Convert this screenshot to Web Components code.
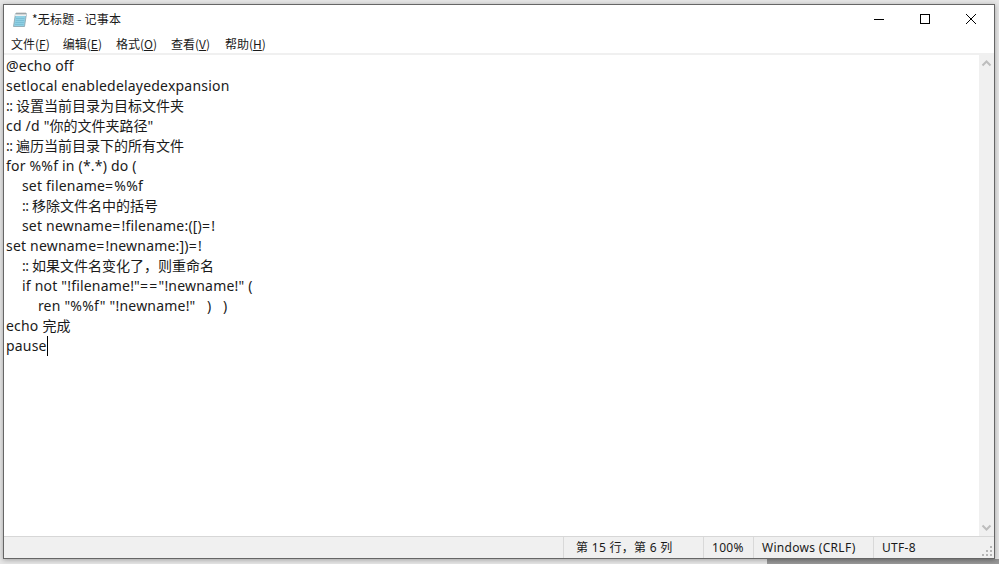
<!DOCTYPE html>
<html lang="zh">
<head>
<meta charset="utf-8">
<title>记事本</title>
<style>
html, body { margin: 0; height: 100%; overflow: hidden; }
body {
    background: linear-gradient(#8f8f8f, #9a9a9a) 767px 559px / 232px 5px no-repeat, #e6e6e6;
    font-family: "Noto Sans", "Noto Sans CJK SC", sans-serif;
}
</style>
</head>
<body>
<notepad-window title-text="*无标题 - 记事本">
<menu-item label="文件" key-char="F"></menu-item>
<menu-item label="编辑" key-char="E" style="margin-left:-1px"></menu-item>
<menu-item label="格式" key-char="O"></menu-item>
<menu-item label="查看" key-char="V"></menu-item>
<menu-item label="帮助" key-char="H" style="margin-left:1px"></menu-item>
<text-area slot="editor"></text-area>
<status-cell slot="status" width="140" inset="12">第 15 行，第 6 列</status-cell>
<status-cell slot="status" width="50">100%</status-cell>
<status-cell slot="status" width="120">Windows (CRLF)</status-cell>
<status-cell slot="status" width="121">UTF-8</status-cell>
</notepad-window>

<script>
const UI_FONT = '"Noto Sans", "Noto Sans CJK SC", sans-serif';

class MenuItem extends HTMLElement {
    connectedCallback() {
        const root = this.attachShadow({ mode: 'open' });
        root.innerHTML = `<style>
:host { display: block; padding: 0 7px; font: 12px/20px "Noto Sans CJK SC", sans-serif; color: #1a1a1a; }
u { text-underline-offset: 1px; }
</style>${this.getAttribute('label')}(<u>${this.getAttribute('key-char')}</u>)`;
    }
}

class StatusCell extends HTMLElement {
    connectedCallback() {
        const root = this.attachShadow({ mode: 'open' });
        // first cell has a bigger left inset than the others
        const inset = this.getAttribute('inset') || 8;
        root.innerHTML = `<style>
:host { display: block; box-sizing: border-box; width: ${this.getAttribute('width')}px; height: 100%; padding-left: ${inset}px;
    border-left: 1px solid #d9d9d9; font: 12px/21px ${UI_FONT}; letter-spacing: .3px; color: #1a1a1a; white-space: nowrap; }
</style><slot></slot>`;
    }
}

const LINES = [
    '@echo off',
    'setlocal enabledelayedexpansion',
    ':: 设置当前目录为目标文件夹',
    'cd /d "你的文件夹路径"',
    ':: 遍历当前目录下的所有文件',
    'for %%f in (*.*) do (',
    '    set filename=%%f',
    '    :: 移除文件名中的括号',
    '    set newname=!filename:([)=!',
    'set newname=!newname:])=!',
    '    :: 如果文件名变化了，则重命名',
    '    if not "!filename!"=="!newname!" (',
    '        ren "%%f" "!newname!"   )   )',
    'echo 完成',
    'pause'
];

class TextArea extends HTMLElement {
    // the font here is narrower than the real one in places, so some runs get their own spacing
    markup(text) {
        return text
            .replace(/=/g, '<span class="eq">=</span>')
            .replace(/^ +/, m => `<span class="indent">${m}</span>`)
            .replace(/:: /, '<span class="colons">:: </span>')
            .replace(/[\u4e00-\u9fff，]+/g, m => `<span class="cjk">${m}</span>`);
    }

    connectedCallback() {
        const root = this.attachShadow({ mode: 'open' });
        root.innerHTML = `<style>
:host { display: block; height: 100%; overflow: hidden; background: #fff; color: #1a1a1a;
    font: 14px/20px ${UI_FONT}; letter-spacing: .2px; padding: 1px 0 0 2px; box-sizing: border-box; }
.line { white-space: pre; height: 20px; }
.indent { letter-spacing: .35px; }
.colons { letter-spacing: -.4px; }
.cjk { letter-spacing: 0; }
.eq { letter-spacing: 1.2px; }
.caret { display: inline-block; width: 1px; height: 20px; background: #000; vertical-align: top; }
</style>`;
        LINES.forEach((text, i) => {
            const line = document.createElement('div');
            line.className = 'line';
            line.innerHTML = this.markup(text);
            if (i === LINES.length - 1) {
                const caret = document.createElement('span');
                caret.className = 'caret';
                line.appendChild(caret);
            }
            root.appendChild(line);
        });
    }
}

class NotepadWindow extends HTMLElement {
    connectedCallback() {
        const root = this.attachShadow({ mode: 'open' });
        root.innerHTML = `<style>
:host { box-sizing: border-box; width: 992px; height: 555px; margin: 4px 0 0 3px;
    border: 1px solid #666; background: #fff; display: flex; flex-direction: column;
    box-shadow: 0 1px 5px rgba(0,0,0,.3); }
.title { height: 28px; display: flex; align-items: center; flex: none; }
.icon { margin: 0 3px 0 8px; display: block; }
.name { font: 12px/16px "Noto Sans CJK SC", sans-serif; letter-spacing: .2px; color: #1a1a1a; flex: 1; }
.btn { width: 46px; height: 28px; display: flex; align-items: center; justify-content: center; }
.menu { height: 19px; margin-top: 1px; display: flex; flex: none; }
.body { flex: 1; min-height: 0; display: flex; border-top: 2px solid #f0f0f0; }
.edit { flex: 1; min-width: 0; }
.scroll { width: 15px; background: #f0f0f0; display: flex; flex-direction: column; justify-content: space-between; align-items: center; flex: none; }
.arrow { width: 15px; height: 17px; display: block; }
.status { height: 21px; flex: none; background: #f0f0f0; border-top: 1px solid #d7d7d7; display: flex; justify-content: flex-end; position: relative; }
.grip { position: absolute; right: 1px; bottom: 1px; }
</style>
<div class="title">
  <svg class="icon" width="17" height="17" viewBox="0 0 17 17">
    <path d="M3.5 2.5h11l-2 13H1.5z" fill="#8fd0e4" stroke="#8aa0a8" stroke-width=".8"/>
    <path d="M3.5 2.5h11l-.4 2.5H3.1z" fill="#eef2f3"/>
    <path d="M5 1.5v2M7 1.5v2M9 1.5v2M11 1.5v2M13 1.5v2" stroke="#666" stroke-width=".8"/>
    <path d="M4 7.5h8.5M3.7 9.5h8.5M3.4 11.5h8.5M3.1 13.5h8.5" stroke="#74b8cf" stroke-width=".7"/>
  </svg>
  <div class="name">${this.getAttribute('title-text')}</div>
  <div class="btn"><svg width="10" height="10"><path d="M0 5.5h10" stroke="#000"/></svg></div>
  <div class="btn"><svg width="10" height="10"><rect x=".5" y=".5" width="9" height="9" fill="none" stroke="#000"/></svg></div>
  <div class="btn"><svg width="10" height="10"><path d="M0 0l10 10M10 0L0 10" stroke="#000" stroke-width="1"/></svg></div>
</div>
<div class="menu"><slot></slot></div>
<div class="body">
  <div class="edit"><slot name="editor"></slot></div>
  <div class="scroll">
    <svg class="arrow" viewBox="0 0 15 17"><path d="M3.5 10.5l4-4 4 4" fill="none" stroke="#bdbdbd" stroke-width="2"/></svg>
    <svg class="arrow" viewBox="0 0 15 17"><path d="M3.5 6.5l4 4 4-4" fill="none" stroke="#bdbdbd" stroke-width="2"/></svg>
  </div>
</div>
<div class="status">
  <slot name="status"></slot>
  <svg class="grip" width="11" height="11" fill="#b5b5b5"><rect x="8" y="0" width="2" height="2"/><rect x="4" y="4" width="2" height="2"/><rect x="8" y="4" width="2" height="2"/><rect x="0" y="8" width="2" height="2"/><rect x="4" y="8" width="2" height="2"/><rect x="8" y="8" width="2" height="2"/></svg>
</div>`;
    }
}

customElements.define('menu-item', MenuItem);
customElements.define('status-cell', StatusCell);
customElements.define('text-area', TextArea);
customElements.define('notepad-window', NotepadWindow);
</script>
</body>
</html>
